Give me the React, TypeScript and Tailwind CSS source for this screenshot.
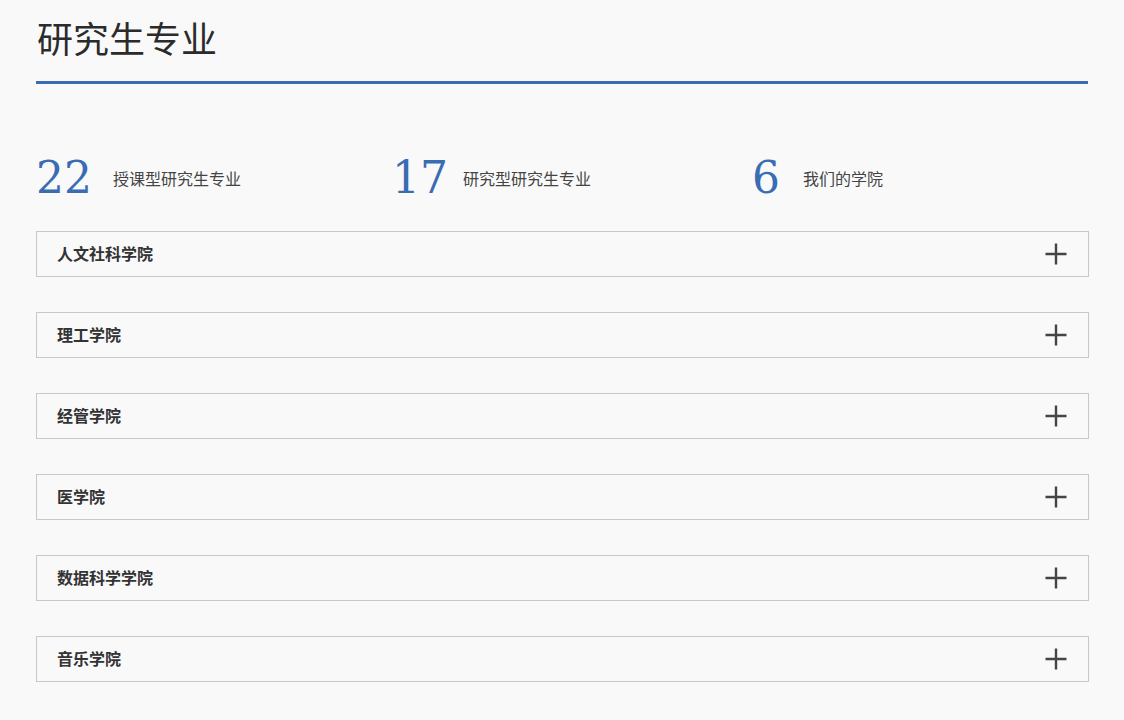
import React from "react";

const stats = [
    { num: "22", label: "授课型研究生专业", width: "w-[356px]", gap: "gap-[21px]" },
    { num: "17", label: "研究型研究生专业", width: "w-[360px]", gap: "gap-[15px]" },
    { num: "6", label: "我们的学院", width: "w-[300px]", gap: "gap-[23px]" },
];

const schools = ["人文社科学院", "理工学院", "经管学院", "医学院", "数据科学学院", "音乐学院"];

const cjk = { fontFamily: '"Noto Sans CJK SC", "Noto Sans", sans-serif' };

function PlusIcon() {
    return (
        <svg width="24" height="24" viewBox="0 0 24 24" className="text-[#444]">
            <path d="M12 1.5v21M1.5 12h21" stroke="currentColor" strokeWidth="2.4" fill="none" />
        </svg>
    );
}

export default function App() {
    return (
        <div className="min-h-[720px] bg-[#f9f9f9] px-[36px] pt-[12px] pb-[38px]" style={cjk}>
            {/* Header */}
            <h1 className="text-[36px] leading-[50px] text-[#2b2b2b] pl-[1px]">研究生专业</h1>
            <div className="mt-[19px] h-[3px] w-[1052px] bg-[#3a6cb4]" />

            {/* Stats */}
            <div className="mt-[66px] flex items-center h-[56px]">
                {stats.map((s) => (
                    <div key={s.num} className={`flex items-center ${s.width} ${s.gap}`}>
                        <span
                            className="text-[44px] leading-[56px] text-[#3a6cb4]"
                            style={{ fontFamily: '"DejaVu Serif", "Liberation Serif", serif' }}
                        >
                            {s.num}
                        </span>
                        <span className="text-[16px] text-[#444]">{s.label}</span>
                    </div>
                ))}
            </div>

            {/* Schools */}
            <div className="mt-[25px] flex flex-col gap-[35px] w-[1053px]">
                {schools.map((name) => (
                    <div
                        key={name}
                        className="h-[46px] border border-[#c8c8c8] bg-[#f9f9f9] flex items-center justify-between pl-[20px] pr-[20px]"
                    >
                        <span className="text-[16px] font-bold text-[#333] pb-[3px]">{name}</span>
                        <PlusIcon />
                    </div>
                ))}
            </div>
        </div>
    );
}
